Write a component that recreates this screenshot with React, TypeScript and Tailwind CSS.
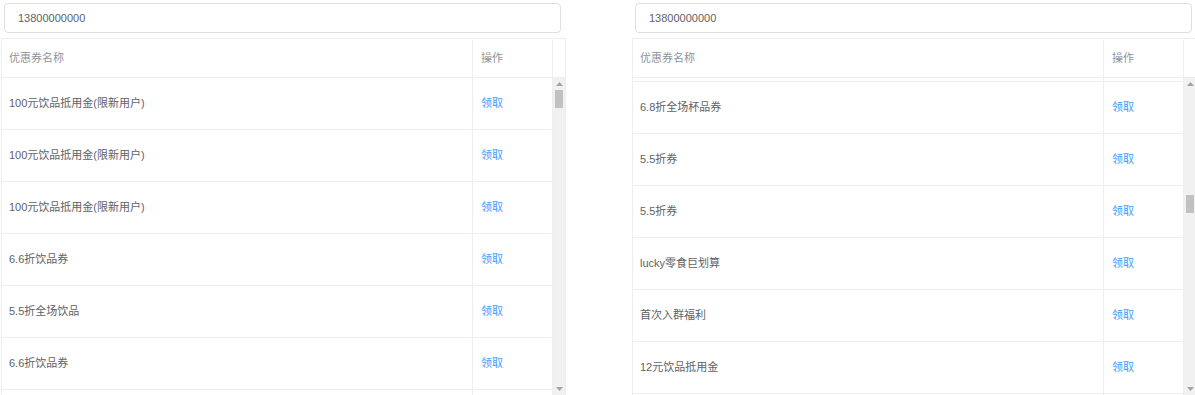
import React from "react";

const font = { fontFamily: '"Liberation Sans", "Noto Sans CJK SC", sans-serif' };

const Arrow: React.FC<{ down?: boolean }> = ({ down }) => (
  <div className="flex h-[12px] items-center justify-center">
    <svg width="7" height="4" viewBox="0 0 7 4">
      {down ? <polygon points="0,0 7,0 3.5,4" fill="#a3a3a3" /> : <polygon points="0,4 7,4 3.5,0" fill="#a3a3a3" />}
    </svg>
  </div>
);

const ScrollBar: React.FC<{ offset: "left" | "right" }> = ({ offset }) => (
  <div className="flex w-[12px] flex-col bg-[#f1f1f1]">
    <Arrow />
    <div className={offset === "left" ? "mx-[2px] h-[18px] bg-[#c1c1c1]" : "mx-[2px] mt-[105px] h-[18px] bg-[#c1c1c1]"} />
    <div className="flex-1" />
    <Arrow down />
  </div>
);

const Row: React.FC<{ name: string }> = ({ name }) => (
  <div className="flex h-[52px] border-b border-[#ebeef5]">
    <div className="flex w-[471px] items-center border-r border-[#ebeef5] pl-[7px] text-[#606266]">{name}</div>
    <div className="flex w-[80px] items-center border-r border-[#ebeef5] pl-[8px] text-[#409eff]">{name ? "领取" : ""}</div>
  </div>
);

const Panel: React.FC<{ rows: string[]; side: "left" | "right" }> = ({ rows, side }) => (
  <div className="w-[565px]">
    <div className="ml-[3px] mt-[3px] flex h-[30px] w-[557px] items-center rounded-[4px] border border-[#dcdfe6] pl-[13px] text-[#606266]">
      13800000000
    </div>
    <div className="mt-[5px] border-l border-r border-t border-[#ebeef5]">
      <div className="flex h-[39px] border-b border-[#ebeef5] pt-[1px] text-[#909399]">
        <div className="flex w-[471px] items-center border-r border-[#ebeef5] pl-[7px]">优惠券名称</div>
        <div className="flex w-[80px] items-center border-r border-[#ebeef5] pl-[8px]">操作</div>
        <div className="w-[12px]" />
      </div>
      <div className="flex h-[317px] overflow-hidden">
        <div className="w-[551px]">
          <div className={side === "right" ? "-mt-[48px]" : ""}>
            {rows.map((r, i) => (
              <Row key={i} name={r} />
            ))}
          </div>
        </div>
        <ScrollBar offset={side} />
      </div>
    </div>
  </div>
);

const leftRows = [
  "100元饮品抵用金(限新用户)",
  "100元饮品抵用金(限新用户)",
  "100元饮品抵用金(限新用户)",
  "6.6折饮品券",
  "5.5折全场饮品",
  "6.6折饮品券",
  "",
];

const rightRows = [
  "",
  "6.8折全场杯品券",
  "5.5折券",
  "5.5折券",
  "lucky零食巨划算",
  "首次入群福利",
  "12元饮品抵用金",
  "",
];

export default function App() {
  return (
    <div className="flex h-[395px] w-[1195px] gap-[66px] overflow-hidden bg-white pl-[1px] text-[11px]" style={font}>
      <Panel rows={leftRows} side="left" />
      <Panel rows={rightRows} side="right" />
    </div>
  );
}
